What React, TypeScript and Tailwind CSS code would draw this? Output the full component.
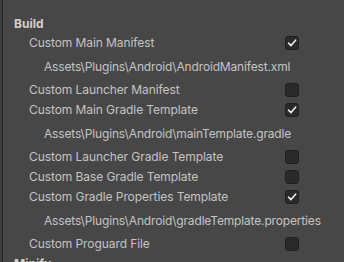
import React from "react";

type Row =
  | { kind: "toggle"; label: string; checked: boolean }
  | { kind: "path"; text: string };

const rows: Row[] = [
  { kind: "toggle", label: "Custom Main Manifest", checked: true },
  { kind: "path", text: "Assets\\Plugins\\Android\\AndroidManifest.xml" },
  { kind: "toggle", label: "Custom Launcher Manifest", checked: false },
  { kind: "toggle", label: "Custom Main Gradle Template", checked: true },
  { kind: "path", text: "Assets\\Plugins\\Android\\mainTemplate.gradle" },
  { kind: "toggle", label: "Custom Launcher Gradle Template", checked: false },
  { kind: "toggle", label: "Custom Base Gradle Template", checked: false },
  { kind: "toggle", label: "Custom Gradle Properties Template", checked: true },
  { kind: "path", text: "Assets\\Plugins\\Android\\gradleTemplate.properties" },
  { kind: "toggle", label: "Custom Proguard File", checked: false },
];

function Checkbox({ checked }: { checked: boolean }) {
  return (
    <div className="w-[14px] h-[14px] rounded-[3px] bg-[#2a2a2a] border border-[#202020] flex items-center justify-center">
      {checked && (
        <svg width="10" height="10" viewBox="0 0 10 10">
          <path d="M1.5 5.2 L4 7.6 L8.6 2.2" fill="none" stroke="#ececec" strokeWidth="1.6" strokeLinecap="round" strokeLinejoin="round" />
        </svg>
      )}
    </div>
  );
}

export default function App() {
  return (
    <div
      className="w-[344px] h-[262px] overflow-hidden bg-[#474747] flex text-[12px] text-[#c4c4c4]"
      style={{ fontFamily: "Inter, 'Noto Sans', sans-serif" }}
    >
      {/* window edge */}
      <div className="w-[2px] shrink-0 bg-[#3f3f3f]" />
      <div className="w-[1px] shrink-0 bg-[#242424]" />
      <div className="flex-1 flex flex-col">
        <div className="h-[19px] shrink-0 mt-[14px] flex items-center pl-[11px] font-bold text-[#d0d0d0]">Build</div>
        {rows.map((row, i) =>
          row.kind === "toggle" ? (
            <div key={i} className="h-5 shrink-0 flex items-center pl-[26px] tracking-[-0.08px]">
              <span className="flex-1">{row.label}</span>
              <div className="w-[59px]">
                <Checkbox checked={row.checked} />
              </div>
            </div>
          ) : (
            <div key={i} className="h-[27px] shrink-0 flex items-center pl-[41px] tracking-[-0.16px]">
              {row.text}
            </div>
          )
        )}
        <div className="h-5 shrink-0 flex items-center pl-[11px] font-bold text-[#d0d0d0]">Minify</div>
      </div>
    </div>
  );
}
